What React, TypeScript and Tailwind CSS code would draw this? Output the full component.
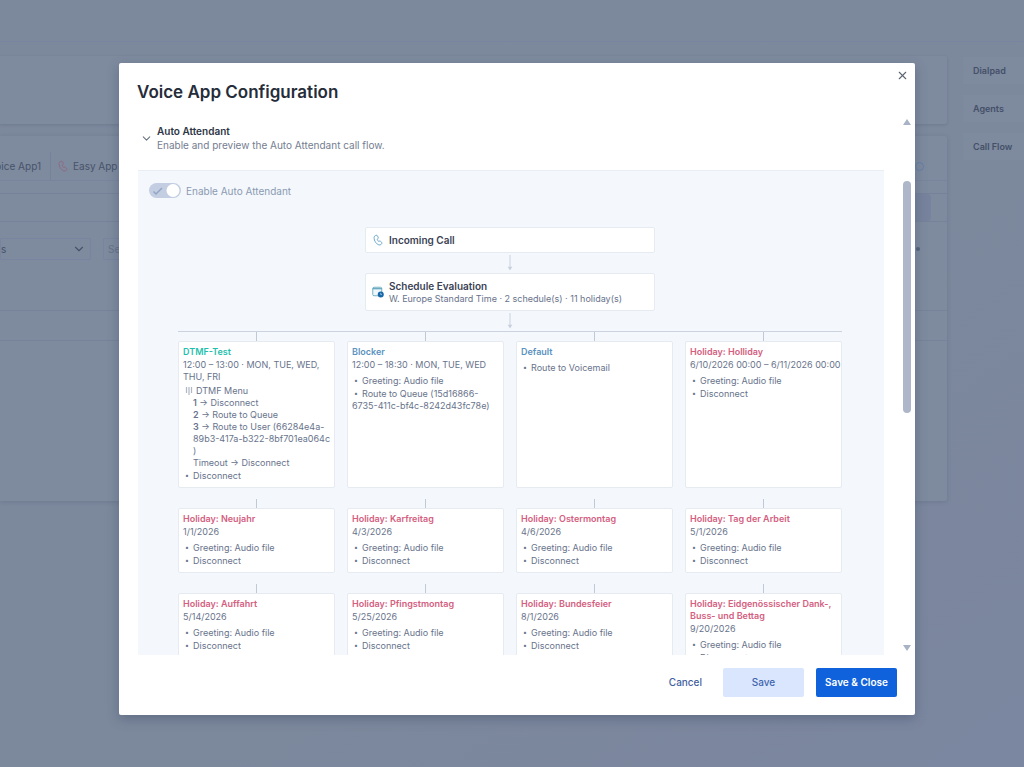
import React from "react";
import { ChevronDown, X } from "lucide-react";

type MenuOption = { key?: string; text: React.ReactNode };
type Branch = {
  title: string;
  tone: "teal" | "blue" | "rose";
  when?: string;
  menu?: MenuOption[];
  steps: string[];
};

const toneClass = {
  teal: "text-[#1fbfae]",
  blue: "text-[#5b92bf]",
  rose: "text-[#d4607f]",
};

const holiday = (name: string, when: string): Branch => ({
  title: `Holiday: ${name}`,
  tone: "rose",
  when,
  steps: ["Greeting: Audio file", "Disconnect"],
});

const branches: Branch[] = [
  {
    title: "DTMF-Test",
    tone: "teal",
    when: "12:00 – 13:00 · MON, TUE, WED, THU, FRI",
    menu: [
      { key: "1", text: "Disconnect" },
      { key: "2", text: "Route to Queue" },
      {
        key: "3",
        text: (
          <>
            Route to User (66284e4a-
            <wbr />
            <span className="whitespace-nowrap">89b3-417a-b322-8bf701ea064c</span>
            <wbr />)
          </>
        ),
      },
      { text: "Disconnect" },
    ],
    steps: ["Disconnect"],
  },
  {
    title: "Blocker",
    tone: "blue",
    when: "12:00 – 18:30 · MON, TUE, WED",
    steps: ["Greeting: Audio file", "Route to Queue (15d16866-6735-411c-bf4c-8242d43fc78e)"],
  },
  { title: "Default", tone: "blue", steps: ["Route to Voicemail"] },
  holiday("Holliday", "6/10/2026 00:00 – 6/11/2026 00:00"),
  holiday("Neujahr", "1/1/2026"),
  holiday("Karfreitag", "4/3/2026"),
  holiday("Ostermontag", "4/6/2026"),
  holiday("Tag der Arbeit", "5/1/2026"),
  holiday("Auffahrt", "5/14/2026"),
  holiday("Pfingstmontag", "5/25/2026"),
  holiday("Bundesfeier", "8/1/2026"),
  holiday("Eidgenössischer Dank-, Buss- und Bettag", "9/20/2026"),
];

function PhoneIcon({ className }: { className: string }) {
  return (
    <svg viewBox="0 0 20 20" fill="none" stroke="currentColor" strokeWidth="1.5" strokeLinejoin="round" className={className} aria-hidden="true">
      <path d="M7.1 2.2 5.7 2.7C4.4 3.1 3.6 4.2 3.5 5.5c-.2 3 .8 6 2.700 8.700 1.600 2.200 3.700 3.500 5.700 4 1.200.300 2.500-.100 3.400-1l.9-1c.6-.7.6-1.700-.1-2.300l-1.900-1.700c-.5-.5-1.200-.6-1.800-.4l-1.600.5c-.8-.8-1.800-2.400-2.100-3.600l1.200-1.200c.5-.5.6-1.200.4-1.800L9.300 3.300c-.3-.9-1.300-1.400-2.200-1.100Z" />
    </svg>
  );
}

function ScheduleIcon() {
  return (
    <svg viewBox="0 0 24 24" className="size-3 shrink-0" aria-hidden="true">
      <rect x="1.500" y="2.500" width="18" height="17" rx="2.500" fill="#eef7fb" stroke="#6aaabd" strokeWidth="1.800" />
      <path d="M1.500 5.500h18" stroke="#3f93b0" strokeWidth="2" />
      <circle cx="17.500" cy="17" r="6" fill="#1667a8" />
      <path d="M17.500 13.800v3.400h2.400" fill="none" stroke="#cfe6f5" strokeWidth="1.300" />
    </svg>
  );
}

function DialpadIcon() {
  return (
    <svg viewBox="0 0 16 16" className="size-2 shrink-0" fill="#8792a6" aria-hidden="true">
      {[3, 8, 13].map((x) =>
        [2, 6, 10].map((y) => <circle key={`${x}-${y}`} cx={x} cy={y} r="1.500" />)
      )}
      <circle cx="8" cy="14" r="1.500" />
    </svg>
  );
}

function FlowArrow() {
  return (
    <svg viewBox="0 0 8 17" className="mx-auto my-[2px] h-4 w-2" aria-hidden="true">
      <path d="M4 0v14" stroke="#cfd6e3" strokeWidth="1.200" />
      <path d="M1.500 12.500h5L4 16.500Z" fill="#c8d0de" />
    </svg>
  );
}

function BranchCard({ branch }: { branch: Branch }) {
  return (
    <li className="flex min-w-0 flex-col">
      <span className="mx-auto h-[9px] w-px shrink-0 bg-[#c0c9d6]" />
      <article className="flex-1 rounded-xs border border-[#e6ebf2] bg-white pt-1 pb-[5px] pl-1">
        <h3 className={`font-semibold ${toneClass[branch.tone]}`}>{branch.title}</h3>
        {branch.when && <p className="mt-px">{branch.when}</p>}
        {branch.menu && (
          <div className="mt-[2px]">
            <p className="flex items-center gap-[3px] pl-[2px]">
              <DialpadIcon />
              DTMF Menu
            </p>
            <ul className="pr-[3px] pl-[10px]">
              {branch.menu.map((option) => (
                <li key={option.key ?? "timeout"}>
                  {option.key ? <b className="font-semibold">{option.key}</b> : "Timeout"} → {option.text}
                </li>
              ))}
            </ul>
          </div>
        )}
        <ul className={`flex flex-col gap-px ${branch.menu ? "mt-px" : "mt-1"}`}>
          {branch.steps.map((step) => (
            <li key={step}>
              <span className="inline-block w-[10px] pl-[2px] align-top text-[7px]">•</span>
              {step}
            </li>
          ))}
        </ul>
      </article>
    </li>
  );
}

function Backdrop() {
  return (
    <div aria-hidden="true" className="flex h-full flex-col overflow-hidden bg-linear-to-br from-[#7c889c] from-60% to-[#7b86a0] text-[10px] text-[#47536a]">
      <div className="h-[42px] shrink-0 border-b border-[#7884a0]" />
      <div className="flex gap-4 pt-[14px]">
        <div className="flex min-w-0 flex-1 flex-col gap-3">
          <div className="h-[68px] rounded-r-xs bg-[#7e8a9e] shadow-[0_1px_3px_rgba(60,72,100,0.2)]" />
          <div className="h-[365px] rounded-r-xs bg-[#7e8a9e] pt-4 shadow-[0_1px_4px_rgba(60,72,100,0.22)]">
            <div className="flex h-[29px] items-center border-b border-[#7682a0]/60">
              <span className="flex h-full w-[51px] items-center justify-end border-r border-[#76829a] pr-[9px] whitespace-nowrap">
                Voice App1
              </span>
              <PhoneIcon className="ml-[6px] size-3 text-[#8f6580]" />
              <span className="ml-1 whitespace-nowrap">Easy App</span>
              <span className="mr-[23px] ml-auto size-[9px] rounded-full border border-[#6480aa]" />
            </div>
            <div className="mt-3 flex h-[29px] justify-end border-y border-[#76829a]">
              <span className="mr-4 w-[60px] rounded-sm bg-[#77839d]" />
            </div>
            <div className="mt-4 flex h-[22px] items-center gap-3">
              <span className="flex h-full w-[91px] items-center justify-between rounded-r-xs border border-[#7884a0] pr-1">
                <span>s</span>
                <ChevronDown className="size-[14px]" />
              </span>
              <span className="flex h-full w-[91px] items-center rounded-xs border border-[#7884a0] px-1 text-[#667289]">
                Search
              </span>
              <span className="mr-[27px] ml-auto size-1 rounded-full bg-[#56637d]" />
            </div>
            <div className="mt-[50px] h-[31px] border-y border-[#77839a]" />
          </div>
        </div>
        <div className="flex w-[61px] shrink-0 flex-col gap-[11px] pt-px text-[9px] font-semibold text-[#445069]">
          <span className="flex h-[27px] items-center bg-[#7e8a9e] pl-[10px]">Dialpad</span>
          <span className="flex h-[27px] items-center bg-[#7e8a9e] pl-[10px]">Agents</span>
          <span className="flex h-[27px] items-center bg-[#7e8a9e] pl-[10px] whitespace-nowrap">Call Flow</span>
        </div>
      </div>
    </div>
  );
}

export default function App() {
  return (
    <div className="relative h-screen font-['Inter','Liberation_Sans',sans-serif]">
      <Backdrop />
      <div className="absolute inset-0 flex pt-[63px] pr-[109px] pb-[52px] pl-[119px]">
        <section
          role="dialog"
          aria-labelledby="dialog-title"
          className="relative flex min-w-0 flex-1 flex-col rounded-xs bg-white shadow-[0_4px_12px_rgba(50,62,90,0.35)]"
        >
          <header className="flex h-[50px] shrink-0 items-start justify-between pl-[18px]">
            <h1 id="dialog-title" className="pt-[17px] text-[17px] leading-6 font-semibold text-[#262d3a]">
              Voice App Configuration
            </h1>
            <button type="button" aria-label="Close" className="mt-[6px] mr-[6px] text-[#5c6470]">
              <X className="size-[13px]" strokeWidth={2} />
            </button>
          </header>

          <div className="flex min-h-0 flex-1">
            <div className="flex min-h-0 min-w-0 flex-1 flex-col overflow-hidden pl-[19px]">
              <button type="button" aria-expanded="true" className="flex shrink-0 items-center gap-1 pt-[11px] pb-[18px] pl-[2px] text-left">
                <ChevronDown className="size-[13px] text-[#6d7480]" strokeWidth={2} />
                <span className="text-[10px] leading-[14px]">
                  <span className="block font-semibold text-[#2e3646]">Auto Attendant</span>
                  <span className="block text-[#747d90]">Enable and preview the Auto Attendant call flow.</span>
                </span>
              </button>

              <div className="min-h-0 flex-1 overflow-hidden border-t border-[#e9edf4] bg-[#f4f8fc]">
                <div className="flex items-center gap-[5px] pt-3 pl-[11px]">
                  <span className="relative flex">
                    <input
                      id="enable-attendant"
                      type="checkbox"
                      role="switch"
                      defaultChecked
                      disabled
                      className="h-[15px] w-8 appearance-none rounded-full bg-[#c3cee2]"
                    />
                    <svg viewBox="0 0 32 15" className="pointer-events-none absolute inset-0 h-[15px] w-8" aria-hidden="true">
                      <path d="m4.500 8.500 2.500 2.500 6-6" fill="none" stroke="#94a5c3" strokeWidth="1.500" />
                      <circle cx="24" cy="7.500" r="6.500" fill="#fff" />
                    </svg>
                  </span>
                  <label htmlFor="enable-attendant" className="text-[10px] leading-[14px] text-[#8b9ab2]">
                    Enable Auto Attendant
                  </label>
                </div>

                <div className="pt-[29px] pr-[42px] pl-10 text-[9px] leading-3 text-[#68738b]">
                  <div className="mx-auto flex h-[26px] w-[290px] items-center gap-[5px] rounded-xs border border-[#e6ebf2] bg-white pl-[6px]">
                    <PhoneIcon className="size-3 shrink-0 text-[#5c9fc4]" />
                    <h2 className="text-[10px] font-semibold text-[#3a4254]">Incoming Call</h2>
                  </div>
                  <FlowArrow />
                  <div className="mx-auto flex w-[290px] items-center gap-[5px] rounded-xs border border-[#e6ebf2] bg-white py-[5px] pl-[6px]">
                    <ScheduleIcon />
                    <div>
                      <h2 className="text-[10px] leading-[14px] font-semibold text-[#3a4254]">Schedule Evaluation</h2>
                      <p>W. Europe Standard Time · 2 schedule(s) · 11 holiday(s)</p>
                    </div>
                  </div>
                  <FlowArrow />
                  <ul className="grid grid-cols-4 gap-x-3 gap-y-[11px] border-t border-[#cbd3df]">
                    {branches.map((branch) => (
                      <BranchCard key={branch.title} branch={branch} />
                    ))}
                  </ul>
                </div>
              </div>
            </div>

            <div aria-hidden="true" className="flex w-[31px] shrink-0 flex-col items-end pt-[6px] pr-1 pb-1">
              <svg viewBox="0 0 8 6" className="h-[6px] w-2"><path d="M4 0 8 6H0Z" fill="#a9b3c6" /></svg>
              <div className="flex w-2 flex-1 flex-col pt-[56px]">
                <span className="h-1/2 rounded-full bg-[#adb7c9]" />
              </div>
              <svg viewBox="0 0 8 6" className="h-[6px] w-2"><path d="M4 6 8 0H0Z" fill="#a9b3c6" /></svg>
            </div>
          </div>

          <footer className="flex shrink-0 justify-end gap-3 pt-[13px] pr-[18px] pb-[18px] text-[10px] font-medium">
            <button type="button" className="h-[29px] px-[9px] text-[#3f60a0]">Cancel</button>
            <button type="button" className="h-[29px] w-[81px] rounded-xs bg-[#d9e6fd] text-[#3f64ad]">Save</button>
            <button type="button" className="h-[29px] w-[81px] rounded-xs bg-[#0f62dc] font-semibold whitespace-nowrap text-white">
              Save &amp; Close
            </button>
          </footer>
        </section>
      </div>
    </div>
  );
}
